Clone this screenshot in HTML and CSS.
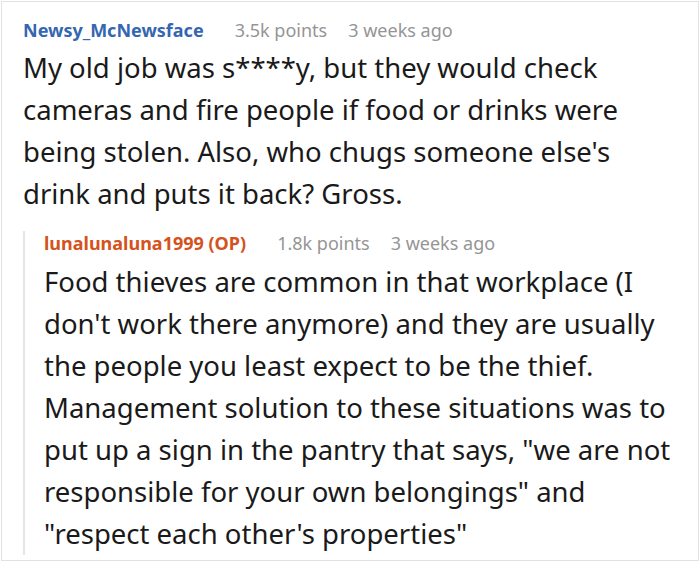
FILE: index.html
```html
<!DOCTYPE html>
<html>
<head>
<meta charset="utf-8">
<link rel="stylesheet" href="styles.css">
</head>
<body>
<div class="frame">
  <div class="comment">
    <div class="meta">
      <span class="user user-blue">Newsy_McNewsface</span>
      <span class="info">3.5k points</span>
      <span class="info">3 weeks ago</span>
    </div>
    <p class="text">My old job was s****y, but they would check cameras and fire people if food or drinks were being stolen. Also, who chugs someone else's drink and puts it back? Gross.</p>
    <div class="reply">
      <div class="meta">
        <span class="user user-orange">lunalunaluna1999 (OP)</span>
        <span class="info">1.8k points</span>
        <span class="info">3 weeks ago</span>
      </div>
      <p class="text">Food thieves are common in that workplace (I don't work there anymore) and they are usually the people you least expect to be the thief. Management solution to these situations was to put up a sign in the pantry that says, "we are not responsible for your own belongings" and "respect each other's properties"</p>
    </div>
  </div>
</div>
</body>
</html>
```
FILE: styles.css
```css
html, body {
  margin: 0;
  padding: 0;
  background: #fff;
}
.frame {
  margin: 1px;
  width: 696px;
  height: 558px;
  border: 1px solid #e2e2e2;
  overflow: hidden;
  font-family: "Noto Sans", "Open Sans", sans-serif;
  color: #1a1a1a;
}
.comment {
  padding: 16px 20px 0 21px;
}
.meta {
  display: flex;
  gap: 21px;
  font-size: 18px;
  line-height: 24px;
  align-items: baseline;
}
.user {
  font-weight: 700;
  margin-right: 10px;
}
.user-blue { color: #3566b0; }
.user-orange { color: #d5521d; }
.info { color: #959595; }
.text {
  margin: 0;
  font-size: 27.5px;
  line-height: 42px;
}
.comment > .text {
  margin-top: 5px;
}
.reply {
  margin-top: 16px;
  border-left: 2px solid #e6e6e6;
  padding-left: 19px;
}
.reply .text {
  margin-top: 6px;
}
```
